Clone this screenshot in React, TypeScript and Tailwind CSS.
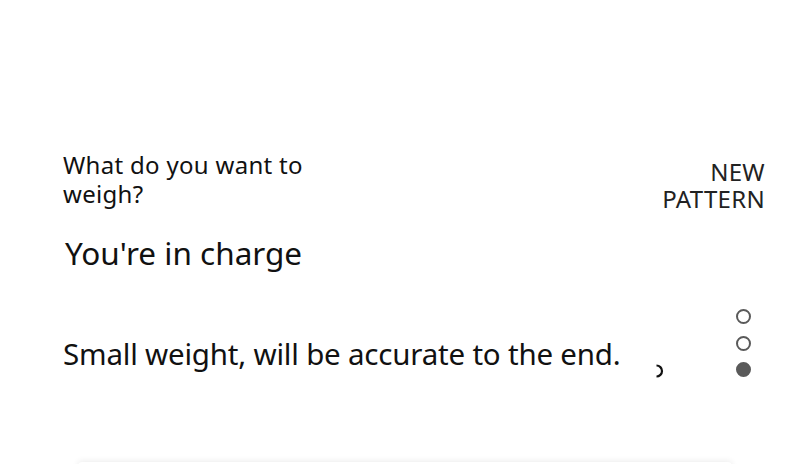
import React from 'react';

function Radio({ checked }: { checked?: boolean }) {
  return (
    <span
      className={`block h-[15px] w-[15px] rounded-full border-2 border-[#5a5a5a] ${checked ? 'bg-[#5a5a5a]' : 'bg-white'}`}
    />
  );
}

export default function App() {
  return (
    <div className="relative h-[464px] w-[790px] overflow-hidden bg-white font-['Noto_Sans',sans-serif] text-[#111]">
      <div className="flex flex-col pl-[63px] pr-[25px] pt-[150px]">
        {/* header */}
        <div className="flex items-start justify-between">
          <h2 className="w-[275px] text-[24px] leading-[29px] tracking-[0.3px]">What do you want to weigh?</h2>
          <button className="mt-[8px] w-[130px] text-right text-[24px] leading-[27px] tracking-[0.3px] text-[#222]">NEW PATTERN</button>
        </div>

        <p className="mt-[21px] pl-[2px] text-[31.5px] leading-[40px]">You're in charge</p>

        <div className="mt-[26px] flex items-start justify-between">
          <p className="mt-[37px] text-[29.5px] leading-[36px] tracking-[-0.2px]">Small weight, will be accurate to the end.</p>
          {/* loading spinner fragment */}
          <svg className="ml-auto mr-[67px] mt-[65px]" width="14" height="14" viewBox="0 0 14 14">
            <path d="M1.5 1.5 A5.5 5.5 0 0 1 1.5 12.5" fill="none" stroke="#111" strokeWidth="2.2" />
          </svg>
          <div className="mr-[14px] flex flex-col items-center gap-[11.5px] pt-[10px]">
            <Radio />
            <Radio />
            <Radio checked />
          </div>
        </div>
      </div>

      <div className="absolute left-[78px] right-[58px] top-[462px] h-[40px] rounded-t-[4px] bg-white shadow-[0_-1px_6px_rgba(0,0,0,0.08)]" />
    </div>
  );
}
